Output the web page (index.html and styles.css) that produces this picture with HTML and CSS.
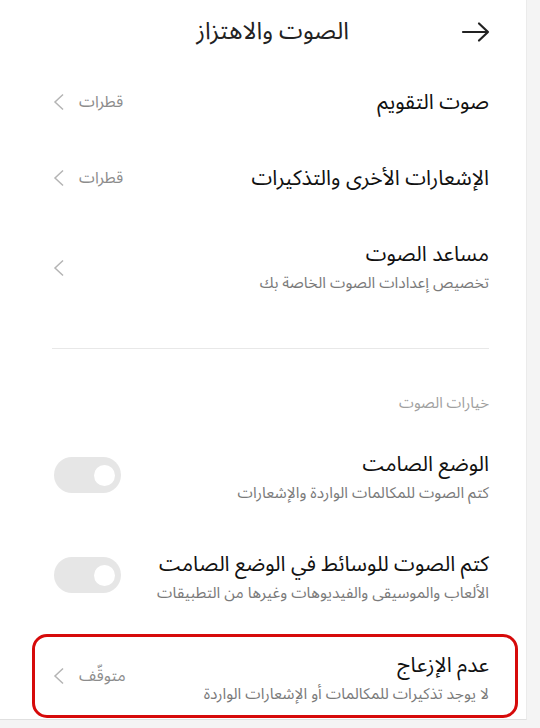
FILE: index.html
```html
<!DOCTYPE html>
<html lang="ar">
<head>
<meta charset="utf-8">
<link rel="stylesheet" href="styles.css">
</head>
<body>
<div class="screen" dir="rtl">
  <header class="header">
    <svg class="back" width="30" height="22" viewBox="0 0 30 22"><path d="M2 11H27M18 2.5L27 11L18 19.5" fill="none" stroke="#222" stroke-width="2.2" stroke-linecap="round" stroke-linejoin="round"/></svg>
    <h1 class="title">الصوت والاهتزاز</h1>
  </header>

  <div class="row single">
    <div class="text"><div class="main">صوت التقويم</div></div>
    <div class="value">قطرات</div>
    <svg class="chev" width="12" height="20" viewBox="0 0 12 20"><path d="M11 2.5L3 10L11 17.5" fill="none" stroke="#b4b4b4" stroke-width="1.5"/></svg>
  </div>
  <div class="row single">
    <div class="text"><div class="main">الإشعارات الأخرى والتذكيرات</div></div>
    <div class="value">قطرات</div>
    <svg class="chev" width="12" height="20" viewBox="0 0 12 20"><path d="M11 2.5L3 10L11 17.5" fill="none" stroke="#b4b4b4" stroke-width="1.5"/></svg>
  </div>
  <div class="row double r3">
    <div class="text"><div class="main">مساعد الصوت</div><div class="sub">تخصيص إعدادات الصوت الخاصة بك</div></div>
    <svg class="chev" width="12" height="20" viewBox="0 0 12 20"><path d="M11 2.5L3 10L11 17.5" fill="none" stroke="#b4b4b4" stroke-width="1.5"/></svg>
  </div>

  <div class="divider"></div>
  <div class="section">خيارات الصوت</div>

  <div class="row double shift first">
    <div class="text"><div class="main">الوضع الصامت</div><div class="sub">كتم الصوت للمكالمات الواردة والإشعارات</div></div>
    <div class="toggle"><span class="knob"></span></div>
  </div>
  <div class="row double shift">
    <div class="text"><div class="main">كتم الصوت للوسائط في الوضع الصامت</div><div class="sub">الألعاب والموسيقى والفيديوهات وغيرها من التطبيقات</div></div>
    <div class="toggle"><span class="knob"></span></div>
  </div>

  <div class="highlight">
    <div class="row double shift dnd">
      <div class="text"><div class="main">عدم الإزعاج</div><div class="sub">لا يوجد تذكيرات للمكالمات أو الإشعارات الواردة</div></div>
      <div class="value">متوقّف</div>
      <svg class="chev" width="12" height="20" viewBox="0 0 12 20"><path d="M11 2.5L3 10L11 17.5" fill="none" stroke="#b4b4b4" stroke-width="1.5"/></svg>
    </div>
  </div>
</div>
</body>
</html>
```

FILE: styles.css
```css
html, body {
  margin: 0;
  padding: 0;
}
body {
  background: #f4f4f4;
  font-family: "Noto Sans Arabic", "DejaVu Sans", "Noto Sans", sans-serif;
  color: #1a1a1a;
  width: 540px;
  height: 728px;
  overflow: hidden;
}
.screen {
  width: 527px;
  height: 720px;
  background: #fff;
  border-right: 1px solid #ebebeb;
  border-bottom: 1px solid #e0e0e0;
  box-sizing: border-box;
  padding: 0 37px 0 52px;
  display: flex;
  flex-direction: column;
}
.header {
  display: flex;
  align-items: center;
  height: 64px;
  flex: none;
}
.back {
  flex: none;
  margin-right: -2px;
}
.title {
  margin: 0 112px 0 0;
  font-size: 24px;
  font-weight: normal;
  color: #222;
  line-height: 34px;
}
.row {
  display: flex;
  align-items: center;
  flex: none;
}
.row.single {
  height: 76px;
}
.row.double {
  height: 100px;
}
.row.r3 {
  height: 104px;
}
.row.first {
  margin-top: 7px;
}
.text {
  flex: 1;
}
.shift .text {
  padding-top: 6px;
}
.main {
  font-size: 21px;
  color: #111;
  line-height: 30px;
}
.sub {
  font-size: 15.5px;
  color: #7a7a7a;
  line-height: 28px;
}
.value {
  font-size: 16px;
  color: #8c8c8c;
  margin-left: 15px;
}
.chev {
  flex: none;
}
.divider {
  flex: none;
  height: 1px;
  background: #e8e8e8;
  margin-top: 28px;
}
.section {
  flex: none;
  font-size: 15px;
  color: #a0a0a0;
  margin-top: 39px;
  line-height: 30px;
}
.toggle {
  flex: none;
  width: 67px;
  height: 36px;
  margin-left: 2px;
  border-radius: 18px;
  background: #e6e6e6;
  display: flex;
  align-items: center;
  justify-content: flex-start;
  padding: 0 6px;
  box-sizing: border-box;
}
.knob {
  width: 21px;
  height: 21px;
  border-radius: 50%;
  background: #fff;
}
.highlight {
  flex: none;
  margin: 9px -29px 0 -20px;
  border: 3px solid #d60a0a;
  border-radius: 15px;
  padding: 0 26px 0 17px;
  height: 84px;
  box-sizing: border-box;
}
.row.dnd {
  height: 78px;
}
```
